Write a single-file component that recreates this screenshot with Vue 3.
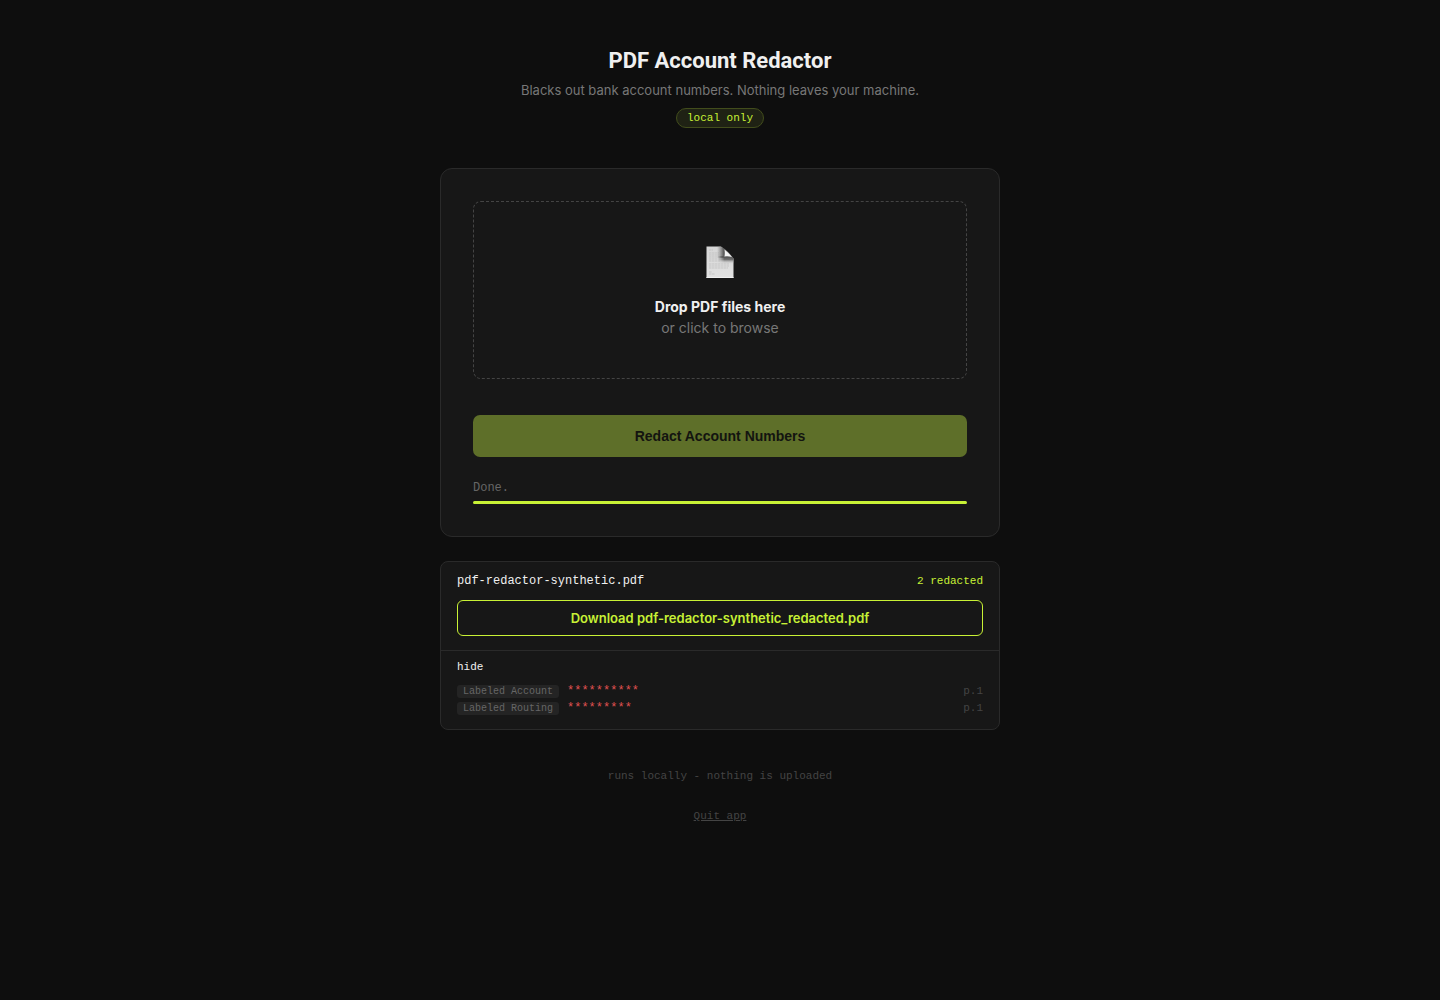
<script setup>
import { ref } from 'vue'

const progress = ref(100)
const showDetails = ref(true)
const fileName = 'pdf-redactor-synthetic.pdf'
const outputName = 'pdf-redactor-synthetic_redacted.pdf'
const matches = [
  { label: 'Labeled Account', masked: '**********', page: 1 },
  { label: 'Labeled Routing', masked: '*********', page: 1 },
]
</script>

<template>
  <main class="page">
    <header class="header">
      <h1>PDF Account Redactor</h1>
      <p>Blacks out bank account numbers. Nothing leaves your machine.</p>
      <span class="badge">local only</span>
    </header>

    <section class="card">
      <label class="dropzone">
        <input class="file-input" type="file" accept="application/pdf" multiple />
        <svg class="doc" width="40" height="40" viewBox="0 0 40 40" aria-hidden="true">
          <defs>
            <linearGradient id="sheet" x1="0" y1="0" x2="0" y2="1">
              <stop offset="0" stop-color="#d6d6d6" />
              <stop offset="1" stop-color="#e2e2e2" />
            </linearGradient>
            <linearGradient id="shade" x1="0" y1="0" x2="1" y2="0">
              <stop offset="0" stop-color="#666" stop-opacity="0" />
              <stop offset="1" stop-color="#444" stop-opacity="0.9" />
            </linearGradient>
            <linearGradient id="under" x1="0" y1="0" x2="0" y2="1">
              <stop offset="0" stop-color="#4a4a4a" />
              <stop offset="0.45" stop-color="#707070" />
              <stop offset="1" stop-color="#d0d0d0" stop-opacity="0" />
            </linearGradient>
            <linearGradient id="fade" x1="0" y1="0" x2="1" y2="0">
              <stop offset="0" stop-color="#000" />
              <stop offset="0.4" stop-color="#fff" />
            </linearGradient>
            <mask id="soft">
              <rect x="18" y="12" width="16" height="12" fill="url(#fade)" />
            </mask>
          </defs>
          <path d="M6.500 4.500H20.500C22.500 5 23 6.500 24 8L31 14.500C33 15.500 33.500 16 33.500 17.500V36H6.500Z" fill="url(#sheet)" />
          <g stroke="#bcbcbc" stroke-width="0.700" stroke-dasharray="2.500 0.500">
            <path d="M9 8H13M9 11H19M9 13H19M9 15H19M9 17H20M9 19H20M9 22H29M9 24H29M9 26H28M9 30H12M9 32H15" />
          </g>
          <path d="M17 5H20.500C22.500 5 23 6.500 24 8V16H17Z" fill="url(#shade)" />
          <path d="M18 14H31C33 15 33.500 16 33.500 17.500V22H18Z" fill="url(#under)" mask="url(#soft)" />
          <path d="M20.500 4.500C25 6 32 13 33.500 17.500C32 15 28 14.500 23.500 15C24.500 10 23.500 6 20.500 4.500Z" fill="#666" />
          <path d="M24.500 7.500C27 9.500 30 12.500 32 15C29.500 14 27 14 24.500 14.500C25 12 25 10 24.500 7.500Z" fill="#f4f4f4" />
          <path d="M6.500 35.500H33.500" stroke="#f0f0f0" />
        </svg>
        <span class="drop-text">
          <strong>Drop PDF files here</strong>
          <span>or click to browse</span>
        </span>
      </label>

      <button class="redact" type="button" disabled>Redact Account Numbers</button>

      <div class="status" role="status">Done.</div>
      <div class="track">
        <div class="bar" :style="{ width: progress + '%' }"></div>
      </div>
    </section>

    <section class="result">
      <div class="summary">
        <div class="file-row">
          <span class="file-name">{{ fileName }}</span>
          <span class="count">{{ matches.length }} redacted</span>
        </div>
        <a class="download" href="#download">Download {{ outputName }}</a>
      </div>
      <div class="details">
        <button class="toggle" type="button" @click="showDetails = !showDetails">{{ showDetails ? 'hide' : 'show' }}</button>
        <ul v-if="showDetails">
          <li v-for="m in matches" :key="m.label">
            <span class="tag">{{ m.label }}</span>
            <span class="masked">{{ m.masked }}</span>
            <span class="page-no">p.{{ m.page }}</span>
          </li>
        </ul>
      </div>
    </section>

    <footer class="footer">
      <p>runs locally - nothing is uploaded</p>
      <button class="quit" type="button">Quit app</button>
    </footer>
  </main>
</template>

<style>
body {
  margin: 0;
  background: #0e0e0e;
}
</style>

<style scoped>
* {
  box-sizing: border-box;
}
.page {
  max-width: 592px;
  margin: 0 auto;
  padding: 48px 16px;
  color: #f0f0f0;
  font-family: Inter, "Liberation Sans", sans-serif;
}
h1,
p,
ul {
  margin: 0;
  padding: 0;
}
.badge,
.status,
.file-row,
.details,
.toggle,
.footer,
.quit {
  font-family: "Courier New", "Liberation Mono", monospace;
}
.header {
  display: flex;
  flex-direction: column;
  align-items: center;
  text-align: center;
  margin-bottom: 40px;
}
h1 {
  font-family: Roboto, Inter, sans-serif;
  font-size: 22px;
  line-height: 26px;
  font-weight: 700;
}
.header p {
  margin-top: 6px;
  font-size: 13px;
  line-height: 20px;
  color: #777;
}
.badge {
  margin-top: 8px;
  padding: 2px 10px;
  border: 1px solid #424d1c;
  border-radius: 20px;
  background: #1f2214;
  color: #c8f135;
  font-size: 11px;
  line-height: 14px;
}
.card,
.result {
  background: #171717;
  border: 1px solid #2a2a2a;
}
.card {
  padding: 32px;
  border-radius: 12px;
}
.dropzone {
  display: flex;
  flex-direction: column;
  align-items: center;
  gap: 14px;
  padding: 40px 24px;
  border: 1px dashed #444;
  border-radius: 8px;
  cursor: pointer;
}
.file-input {
  position: absolute;
  width: 1px;
  height: 1px;
  opacity: 0;
}
.doc {
  display: block;
}
.drop-text {
  display: flex;
  flex-direction: column;
  align-items: center;
  font-size: 14px;
  line-height: 21px;
  color: #777;
}
.drop-text strong {
  color: #f0f0f0;
  font-weight: 700;
}
.redact {
  display: block;
  width: 100%;
  margin-top: 36px;
  padding: 12px;
  border: 0;
  border-radius: 7px;
  background: #5e6f29;
  color: #131410;
  font: bold 14px/18px Arial, "Liberation Sans", sans-serif;
}
.status {
  margin-top: 24px;
  font-size: 12px;
  line-height: 14px;
  color: #666;
}
.track {
  height: 3px;
  margin-top: 6px;
  border-radius: 2px;
  background: #2a2a2a;
  overflow: hidden;
}
.bar {
  height: 100%;
  background: #c8f135;
}
.result {
  margin-top: 24px;
  border-radius: 8px;
}
.summary {
  padding: 12px 16px 14px;
}
.file-row {
  display: flex;
  justify-content: space-between;
  font-size: 12px;
  line-height: 14px;
}
.count {
  color: #c8f135;
  font-size: 11px;
}
.download {
  display: block;
  margin-top: 12px;
  padding: 8px;
  border: 1px solid #c8f135;
  border-radius: 6px;
  color: #c8f135;
  font-size: 13px;
  line-height: 18px;
  font-weight: 600;
  text-align: center;
  text-decoration: none;
}
.details {
  padding: 8px 16px 12px;
  border-top: 1px solid #2a2a2a;
}
.toggle,
.quit {
  display: block;
  padding: 0;
  border: 0;
  background: none;
  font-size: 11px;
  line-height: 16px;
  cursor: pointer;
}
.toggle {
  color: #f0f0f0;
}
ul {
  margin-top: 8px;
  list-style: none;
}
li {
  display: flex;
  align-items: center;
  gap: 8px;
  font-size: 12px;
  line-height: 17px;
}
.tag {
  padding: 0 6px;
  border-radius: 3px;
  background: #242424;
  color: #666;
  font-size: 10px;
  line-height: 13px;
}
.masked {
  color: #e05252;
}
.page-no {
  margin-left: auto;
  color: #444;
  font-size: 11px;
}
.footer {
  display: flex;
  flex-direction: column;
  align-items: center;
  gap: 24px;
  margin-top: 38px;
  font-size: 11px;
  line-height: 16px;
  color: #444;
}
.quit {
  color: #444;
  text-decoration: underline;
}
</style>
